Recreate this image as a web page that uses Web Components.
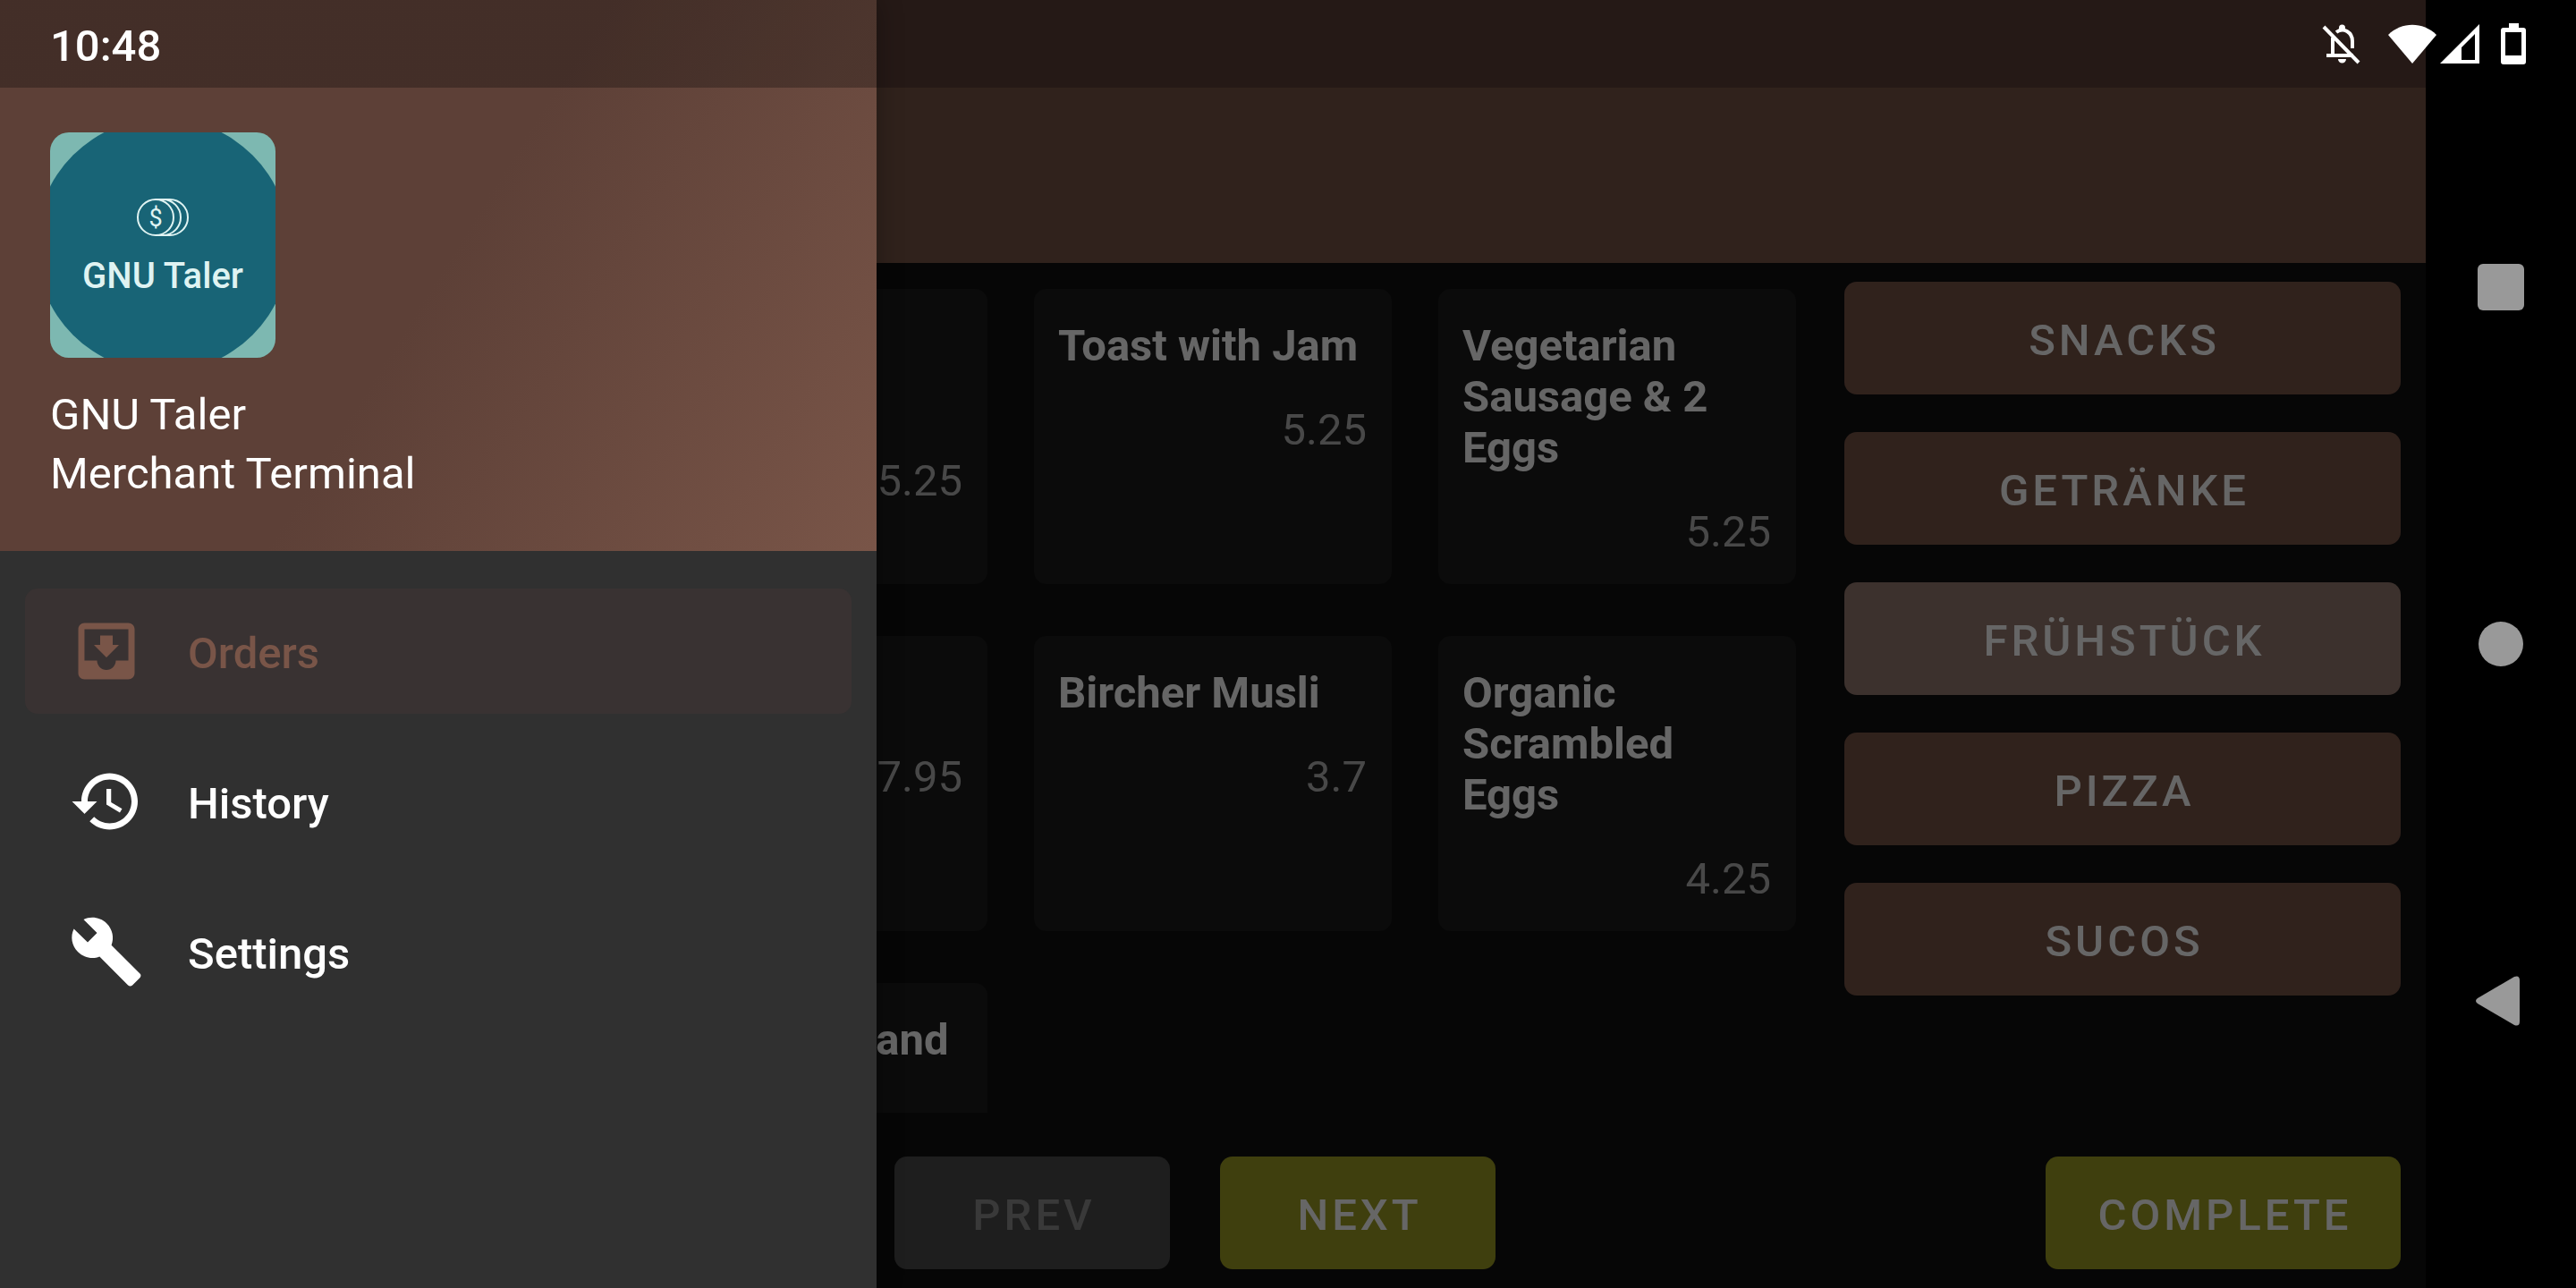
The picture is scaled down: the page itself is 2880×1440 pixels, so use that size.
<!DOCTYPE html>
<html lang="en">
<head>
<meta charset="utf-8">
<meta name="viewport" content="width=device-width, initial-scale=1">
<title>Merchant Terminal</title>
<style>
  html, body { margin: 0; height: 100%; background: #000; }
  body {
    font-family: Roboto, "Noto Sans", sans-serif;
    font-size: 49px;
    line-height: 57px;
    color: #fff;
    --primary: #795548;
    --primary-dark: #5d4037;
    --accent: #9e9d24;
    --radius: 14px;
  }
</style>
</head>
<body>
<pos-screen>
  <pos-app slot="app">
    <product-grid slot="products">
      <product-card name="Fried Eggs Sandwich" price="5.25"></product-card>
      <product-card name="Toast with Jam" price="5.25"></product-card>
      <product-card name="Vegetarian Sausage &amp; 2 Eggs" price="5.25"></product-card>
      <product-card name="Green Bowl" price="7.95"></product-card>
      <product-card name="Bircher Musli" price="3.7"></product-card>
      <product-card name="Organic Scrambled Eggs" price="4.25"></product-card>
      <product-card name="Scrambled and Bacon" price="5.95"></product-card>
    </product-grid>
    <pos-button slot="category">SNACKS</pos-button>
    <pos-button slot="category">GETRÄNKE</pos-button>
    <pos-button slot="category" kind="current">FRÜHSTÜCK</pos-button>
    <pos-button slot="category">PIZZA</pos-button>
    <pos-button slot="category">SUCOS</pos-button>
    <pos-button slot="prev" kind="disabled">PREV</pos-button>
    <pos-button slot="next" kind="accent">NEXT</pos-button>
    <pos-button slot="complete" kind="accent">COMPLETE</pos-button>
  </pos-app>
  <nav-drawer slot="drawer">
    <drawer-item icon="inbox" current>Orders</drawer-item>
    <drawer-item icon="history">History</drawer-item>
    <drawer-item icon="build">Settings</drawer-item>
  </nav-drawer>
  <system-keys slot="keys"></system-keys>
  <status-bar slot="status">10:48</status-bar>
</pos-screen>

<script>
const define = (name, render) => customElements.define(name, class extends HTMLElement {
  constructor() {
    super();
    this.attachShadow({ mode: 'open' });
  }
  connectedCallback() {
    this.shadowRoot.innerHTML = render(this);
  }
});
const esc = s => s.replace(/&/g, '&amp;').replace(/</g, '&lt;');

define('pos-screen', () => `
  <style>
    :host { display: flex; position: relative; height: 100vh; overflow: hidden; background: #000; }
    .window { position: relative; flex: 1; min-width: 0; display: flex; }
    .scrim { position: absolute; inset: 0; background: rgba(0, 0, 0, .6); }
  </style>
  <div class="window">
    <slot name="app"></slot>
    <div class="scrim"></div>
    <slot name="drawer"></slot>
  </div>
  <slot name="keys"></slot>
  <slot name="status"></slot>
`);

define('status-bar', () => `
  <style>
    :host {
      position: absolute; inset: 0 0 auto 0; height: 98px; box-sizing: border-box;
      padding: 0 56px; display: flex; align-items: center; justify-content: space-between;
      font-weight: 500;
    }
    time { padding-top: 4px; }
    .icons, .radio { display: flex; align-items: center; }
    .icons { gap: 24px; }
    .radio { gap: 4px; }
    svg { display: block; height: 46px; }
  </style>
  <time><slot></slot></time>
  <div class="icons">
    <svg width="50" viewBox="0 0 50 46" fill="none" stroke="#fff" stroke-width="4">
      <path d="M2 4L41 44"/>
      <path d="M12 16V36M5 36H35M16 10C24 4 34 10 34 20V28"/>
      <path d="M19 8V5A3.500 3.500 0 0 1 26 5V8ZM18 40H27A4.500 4.500 0 0 1 18 40Z" fill="#fff" stroke="none"/>
    </svg>
    <div class="radio">
      <svg width="54" viewBox="0 0 54 46"><path d="M0 13C15-2 39-2 54 13L27 45Z" fill="#fff"/></svg>
      <svg width="44" viewBox="0 0 44 46"><path d="M44 1V45H0ZM39 12L24 27V41H39Z" fill="#fff" fill-rule="evenodd"/></svg>
    </div>
    <svg width="28" viewBox="0 0 28 46"><path d="M9 0H20V5H25Q28 5 28 8V43Q28 46 25 46H3Q0 46 0 43V8Q0 5 3 5H9ZM5 10V36H23V10Z" fill="#fff" fill-rule="evenodd"/></svg>
  </div>
`);

define('system-keys', () => `
  <style>
    :host {
      width: 168px; box-sizing: border-box; padding: 181px 0; background: #000;
      display: flex; flex-direction: column; justify-content: space-between;
    }
    button {
      height: 280px; padding: 0; border: 0; background: none;
      display: flex; align-items: center; justify-content: center;
    }
    svg { display: block; fill: #999; }
  </style>
  <button aria-label="Overview"><svg width="52" height="52"><rect width="52" height="52" rx="6"/></svg></button>
  <button aria-label="Home"><svg width="50" height="50"><circle cx="25" cy="25" r="25"/></svg></button>
  <button aria-label="Back"><svg width="56" height="56"><path d="M2 25L43 1Q49-1 49 5V51Q49 57 43 55L2 31Q-2 28 2 25Z"/></svg></button>
`);

define('pos-app', () => `
  <style>
    :host { flex: 1; min-width: 0; display: flex; flex-direction: column; background: #101010; }
    .status { height: 98px; background: var(--primary-dark); }
    .toolbar { height: 196px; background: var(--primary); }
    main {
      flex: 1; min-height: 0; display: grid; column-gap: 54px; padding-right: 28px;
      grid-template-columns: 650fr 1304fr 622fr;
    }
    .products { min-height: 0; overflow: hidden; }
    .categories { display: flex; flex-direction: column; gap: 42px; padding-top: 21px; }
    footer {
      display: grid; column-gap: 56px; padding: 49px 28px 21px;
      grid-template-columns: 916fr 308px 308px 503fr 397px;
    }
  </style>
  <div class="status"></div>
  <header class="toolbar"></header>
  <main>
    <section class="order"></section>
    <section class="products"><slot name="products"></slot></section>
    <section class="categories"><slot name="category"></slot></section>
  </main>
  <footer>
    <span></span>
    <slot name="prev"></slot>
    <slot name="next"></slot>
    <span></span>
    <slot name="complete"></slot>
  </footer>
`);

define('product-grid', () => `
  <style>
    :host {
      display: grid; grid-template-columns: repeat(3, 1fr); grid-auto-rows: 330px;
      gap: 58px 52px; padding-top: 29px;
    }
  </style>
  <slot></slot>
`);

define('product-card', el => `
  <style>
    :host {
      display: block; box-sizing: border-box; padding: 35px 28px 35px 27px;
      background: #1c1c1c; border-radius: var(--radius);
    }
    h3 { margin: 0 0 37px; font-size: 49px; line-height: 57px; font-weight: 700; }
    p { margin: 0; text-align: right; color: #b3b3b3; }
  </style>
  <h3>${esc(el.getAttribute('name'))}</h3>
  <p>${esc(el.getAttribute('price'))}</p>
`);

define('pos-button', el => `
  <style>
    :host { display: block; }
    button {
      display: block; width: 100%; height: 126px; padding: 4px 0 0 4px; border: 0;
      border-radius: var(--radius); background: var(--primary); color: #fff;
      font: 500 49px/57px Roboto, "Noto Sans", sans-serif; letter-spacing: 4px;
    }
    :host([kind="current"]) button { background: #967a70; }
    :host([kind="accent"]) button { background: var(--accent); }
    button:disabled { background: #4b4b4b; color: #8f8f8f; }
  </style>
  <button${el.getAttribute('kind') === 'disabled' ? ' disabled' : ''}><slot></slot></button>
`);

define('nav-drawer', () => `
  <style>
    :host {
      position: absolute; inset: 0 auto 0 0; width: 980px; background: #303030;
      display: flex; flex-direction: column; box-shadow: 0 0 28px rgba(0, 0, 0, .3);
    }
    header {
      background:
        linear-gradient(rgba(0, 0, 0, .28), rgba(0, 0, 0, .28)) top / 100% 98px no-repeat,
        linear-gradient(122deg, #5d4037 50%, #795548);
      padding: 148px 56px 53px;
    }
    .logo { display: block; width: 252px; height: 252px; border-radius: 21px; }
    .title { margin: 31px 0 0; line-height: 66px; }
    nav { display: flex; flex-direction: column; gap: 28px; padding: 42px 28px; }
  </style>
  <header>
    <svg class="logo" viewBox="0 0 252 252">
      <rect width="252" height="252" fill="#7db8b1"/>
      <circle cx="126" cy="126" r="142" fill="#186476"/>
      <g fill="none" stroke="#dff3f2" stroke-width="2">
        <circle cx="118" cy="95" r="20"/>
        <path d="M118 75H126A20 20 0 0 1 126 115H118M126 75H134A20 20 0 0 1 134 115H126"/>
      </g>
      <g fill="#dff3f2" text-anchor="middle" font-family="Roboto, sans-serif">
        <text x="118" y="105" font-size="27">$</text>
        <text x="126" y="174" font-size="40" font-weight="500">GNU Taler</text>
      </g>
    </svg>
    <p class="title">GNU Taler<br>Merchant Terminal</p>
  </header>
  <nav><slot></slot></nav>
`);

const ICONS = {
  inbox: 'M19 3H4.990c-1.110 0-1.980.9-1.980 2L3 19c0 1.100.880 2 1.990 2H19c1.100 0 2-.9 2-2V5c0-1.100-.9-2-2-2zm0 12h-4c0 1.660-1.350 3-3 3s-3-1.340-3-3H4.990V5H19v10zm-3-5h-2V7h-4v3H8l4 4 4-4z',
  history: 'M13 3c-4.970 0-9 4.030-9 9H1l3.890 3.890.070.140L9 12H6c0-3.870 3.130-7 7-7s7 3.130 7 7-3.130 7-7 7c-1.930 0-3.680-.79-4.940-2.060l-1.420 1.420C8.270 19.990 10.510 21 13 21c4.970 0 9-4.030 9-9s-4.030-9-9-9zm-1 5v5l4.280 2.540.72-1.210-3.500-2.080V8H12z',
  build: 'M22.700 19l-9.100-9.100c.9-2.300.4-5-1.500-6.900-2-2-5-2.400-7.400-1.300L9 6 6 9 1.600 4.700C.4 7.100.9 10.100 2.900 12.100c1.900 1.900 4.600 2.400 6.900 1.500l9.100 9.100c.4.4 1 .4 1.400 0l2.300-2.300c.5-.4.5-1.100.1-1.400z'
};

define('drawer-item', el => `
  <style>
    :host { display: block; }
    a {
      display: flex; align-items: center; gap: 49px; height: 140px; box-sizing: border-box;
      padding: 0 49px; border-radius: var(--radius);
      color: #fff; font-weight: 500; text-decoration: none;
    }
    :host([current]) a { color: var(--primary); background: #393232; }
    svg { width: 84px; height: 84px; fill: currentColor; }
    span { padding-top: 4px; }
  </style>
  <a href="#${el.getAttribute('icon')}"><svg viewBox="0 0 24 24"><path d="${ICONS[el.getAttribute('icon')]}"/></svg><span><slot></slot></span></a>
`);
</script>
</body>
</html>
